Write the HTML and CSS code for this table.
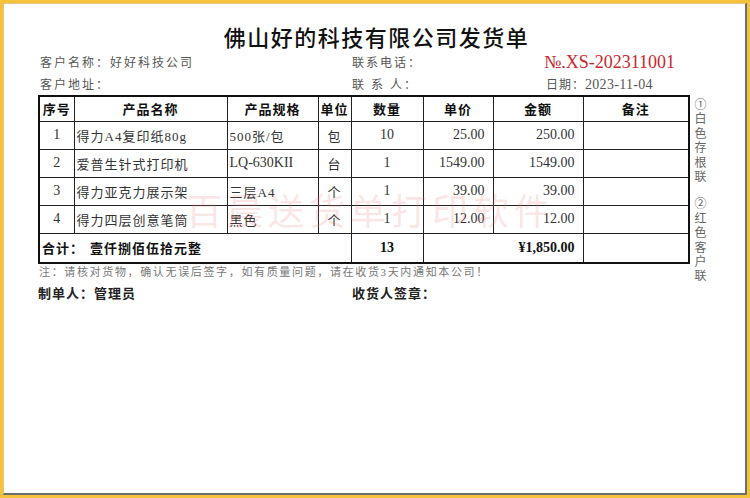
FILE: index.html
```html
<!DOCTYPE html>
<html lang="zh">
<head>
<meta charset="utf-8">
<title>发货单</title>
<link rel="stylesheet" href="styles.css">
</head>
<body>
<div class="frame">
  <div class="paper">
    <h1 class="title">佛山好的科技有限公司发货单</h1>
    <div class="info">
      <div class="info-row">
        <span class="c1">客户名称：好好科技公司</span>
        <span class="c2">联系电话：</span>
        <span class="c3 no">№.XS-202311001</span>
      </div>
      <div class="info-row">
        <span class="c1">客户地址：</span>
        <span class="c2">联&nbsp;系&nbsp;人：</span>
        <span class="c3 date">日期：<span class="num">2023-11-04</span></span>
      </div>
    </div>
    <div class="main">
      <div class="table-wrap">
        <table class="grid">
          <colgroup>
            <col class="w1"><col class="w2"><col class="w3"><col class="w4">
            <col class="w5"><col class="w6"><col class="w7"><col class="w8">
          </colgroup>
          <thead>
            <tr class="head">
              <th>序号</th><th>产品名称</th><th>产品规格</th><th>单位</th>
              <th>数量</th><th>单价</th><th>金额</th><th>备注</th>
            </tr>
          </thead>
          <tbody>
            <tr class="row">
              <td class="ctr num">1</td><td class="lft">得力A4复印纸80g</td><td class="lft">500张/包</td><td class="ctr">包</td>
              <td class="ctr num">10</td><td class="rgt num">25.00</td><td class="rgt num">250.00</td><td></td>
            </tr>
            <tr class="row">
              <td class="ctr num">2</td><td class="lft">爱普生针式打印机</td><td class="lft num">LQ-630KII</td><td class="ctr">台</td>
              <td class="ctr num">1</td><td class="rgt num">1549.00</td><td class="rgt num">1549.00</td><td></td>
            </tr>
            <tr class="row">
              <td class="ctr num">3</td><td class="lft">得力亚克力展示架</td><td class="lft">三层A4</td><td class="ctr">个</td>
              <td class="ctr num">1</td><td class="rgt num">39.00</td><td class="rgt num">39.00</td><td></td>
            </tr>
            <tr class="row">
              <td class="ctr num">4</td><td class="lft">得力四层创意笔筒</td><td class="lft">黑色</td><td class="ctr">个</td>
              <td class="ctr num">1</td><td class="rgt num">12.00</td><td class="rgt num">12.00</td><td></td>
            </tr>
            <tr class="total">
              <td colspan="4" class="lft">合计：<span class="words">壹仟捌佰伍拾元整</span></td>
              <td class="ctr num">13</td>
              <td colspan="2" class="rgt num">¥1,850.00</td>
              <td></td>
            </tr>
          </tbody>
        </table>
        <div class="watermark">百晨送货单打印软件</div>
      </div>
      <div class="side">
        <div class="side-group">①白色存根联</div>
        <div class="side-group">②红色客户联</div>
      </div>
    </div>
    <p class="note">注：请核对货物，确认无误后签字，如有质量问题，请在收货<span class="num">3</span>天内通知本公司！</p>
    <div class="sign">
      <span class="s1">制单人：管理员</span>
      <span class="s2">收货人签章：</span>
    </div>
  </div>
</div>
</body>
</html>
```

FILE: styles.css
```css
* { box-sizing: border-box; }
html, body { margin: 0; padding: 0; background: #ffffff; }
body {
  width: 750px;
  height: 498px;
  font-family: "Liberation Serif", "Noto Sans CJK SC", serif;
  color: #333;
}
.frame {
  width: 750px;
  height: 498px;
  border: 3px solid #f5c23e;
  background: #fff;
}
.paper {
  width: 100%;
  height: 100%;
  border-left: 1px solid #e6c77d;
  border-top: 1px solid #e6c77d;
  border-right: 2px solid #6e6e6e;
  border-bottom: 2px solid #6e6e6e;
  padding: 17px 0 0 34px;
}
.title {
  margin: 0;
  font-family: "Noto Sans CJK SC", sans-serif;
  font-size: 22px;
  font-weight: 500;
  line-height: 30px;
  letter-spacing: 1.5px;
  text-align: center;
  color: #111;
  padding-right: 30px;
}
.info { display: flex; flex-direction: column; }
.info-row {
  display: flex;
  height: 22px;
  align-items: center;
  font-size: 12px;
  letter-spacing: 2px;
  color: #555;
}
.info-row .c1 { width: 314px; padding-left: 2px; }
.info-row .c2 { width: 192px; }
.info-row .c3 { flex: 1; }
.no {
  color: #c8282e;
  font-size: 18px;
  letter-spacing: 0;
}
.date { letter-spacing: 1px; padding-left: 2px; }
.date .num { font-size: 14px; letter-spacing: 0.3px; }

.main { display: flex; align-items: flex-start; height: 168px; }
.table-wrap { position: relative; }
.grid {
  border-collapse: collapse;
  table-layout: fixed;
  width: 650px;
  border: 2px solid #111;
  font-size: 13px;
}
.w1 { width: 35px; } .w2 { width: 153px; } .w3 { width: 91px; } .w4 { width: 33px; }
.w5 { width: 72px; } .w6 { width: 70px; } .w7 { width: 90px; } .w8 { width: 106px; }
.grid th, .grid td {
  border: 1px solid #222;
  padding: 0;
  white-space: nowrap;
  overflow: hidden;
}
.grid th {
  height: 25px;
  font-family: "Noto Sans CJK SC", sans-serif;
  font-weight: 700;
  font-size: 13px;
  color: #111;
  text-align: center;
  letter-spacing: 1px;
}
.grid .row td { height: 28px; color: #333; letter-spacing: 1px; }
.grid .total td {
  height: 30px;
  font-weight: 700;
  color: #111;
  letter-spacing: 1px;
}
.words { margin-left: 6px; }
.ctr { text-align: center; }
.lft { text-align: left; padding-left: 2px !important; }
.rgt { text-align: right; padding-right: 8px !important; }
.grid td.num { letter-spacing: 0; font-size: 14px; }
.grid .total td.num { font-size: 14px; }

.watermark {
  position: absolute;
  left: 148px;
  top: 88px;
  font-family: "Noto Sans CJK SC", sans-serif;
  font-size: 36px;
  letter-spacing: 5px;
  color: rgba(238, 120, 120, 0.2);
  white-space: nowrap;
  pointer-events: none;
}
.side {
  margin-left: 4px;
  padding-top: 2px;
  display: flex;
  flex-direction: column;
  gap: 13px;
  font-family: "Noto Sans CJK SC", sans-serif;
  font-size: 12px;
  color: #666;
}
.side-group {
  width: 13px;
  line-height: 14.4px;
  word-break: break-all;
  text-align: center;
}
.note {
  margin: 0;
  height: 18px;
  line-height: 18px;
  font-size: 11px;
  letter-spacing: 1.65px;
  color: #777;
  padding-left: 1px;
}
.sign {
  display: flex;
  height: 22px;
  align-items: center;
  font-family: "Noto Sans CJK SC", sans-serif;
  font-weight: 700;
  font-size: 13px;
  letter-spacing: 1px;
  color: #222;
}
.sign .s1 { width: 314px; }
```
